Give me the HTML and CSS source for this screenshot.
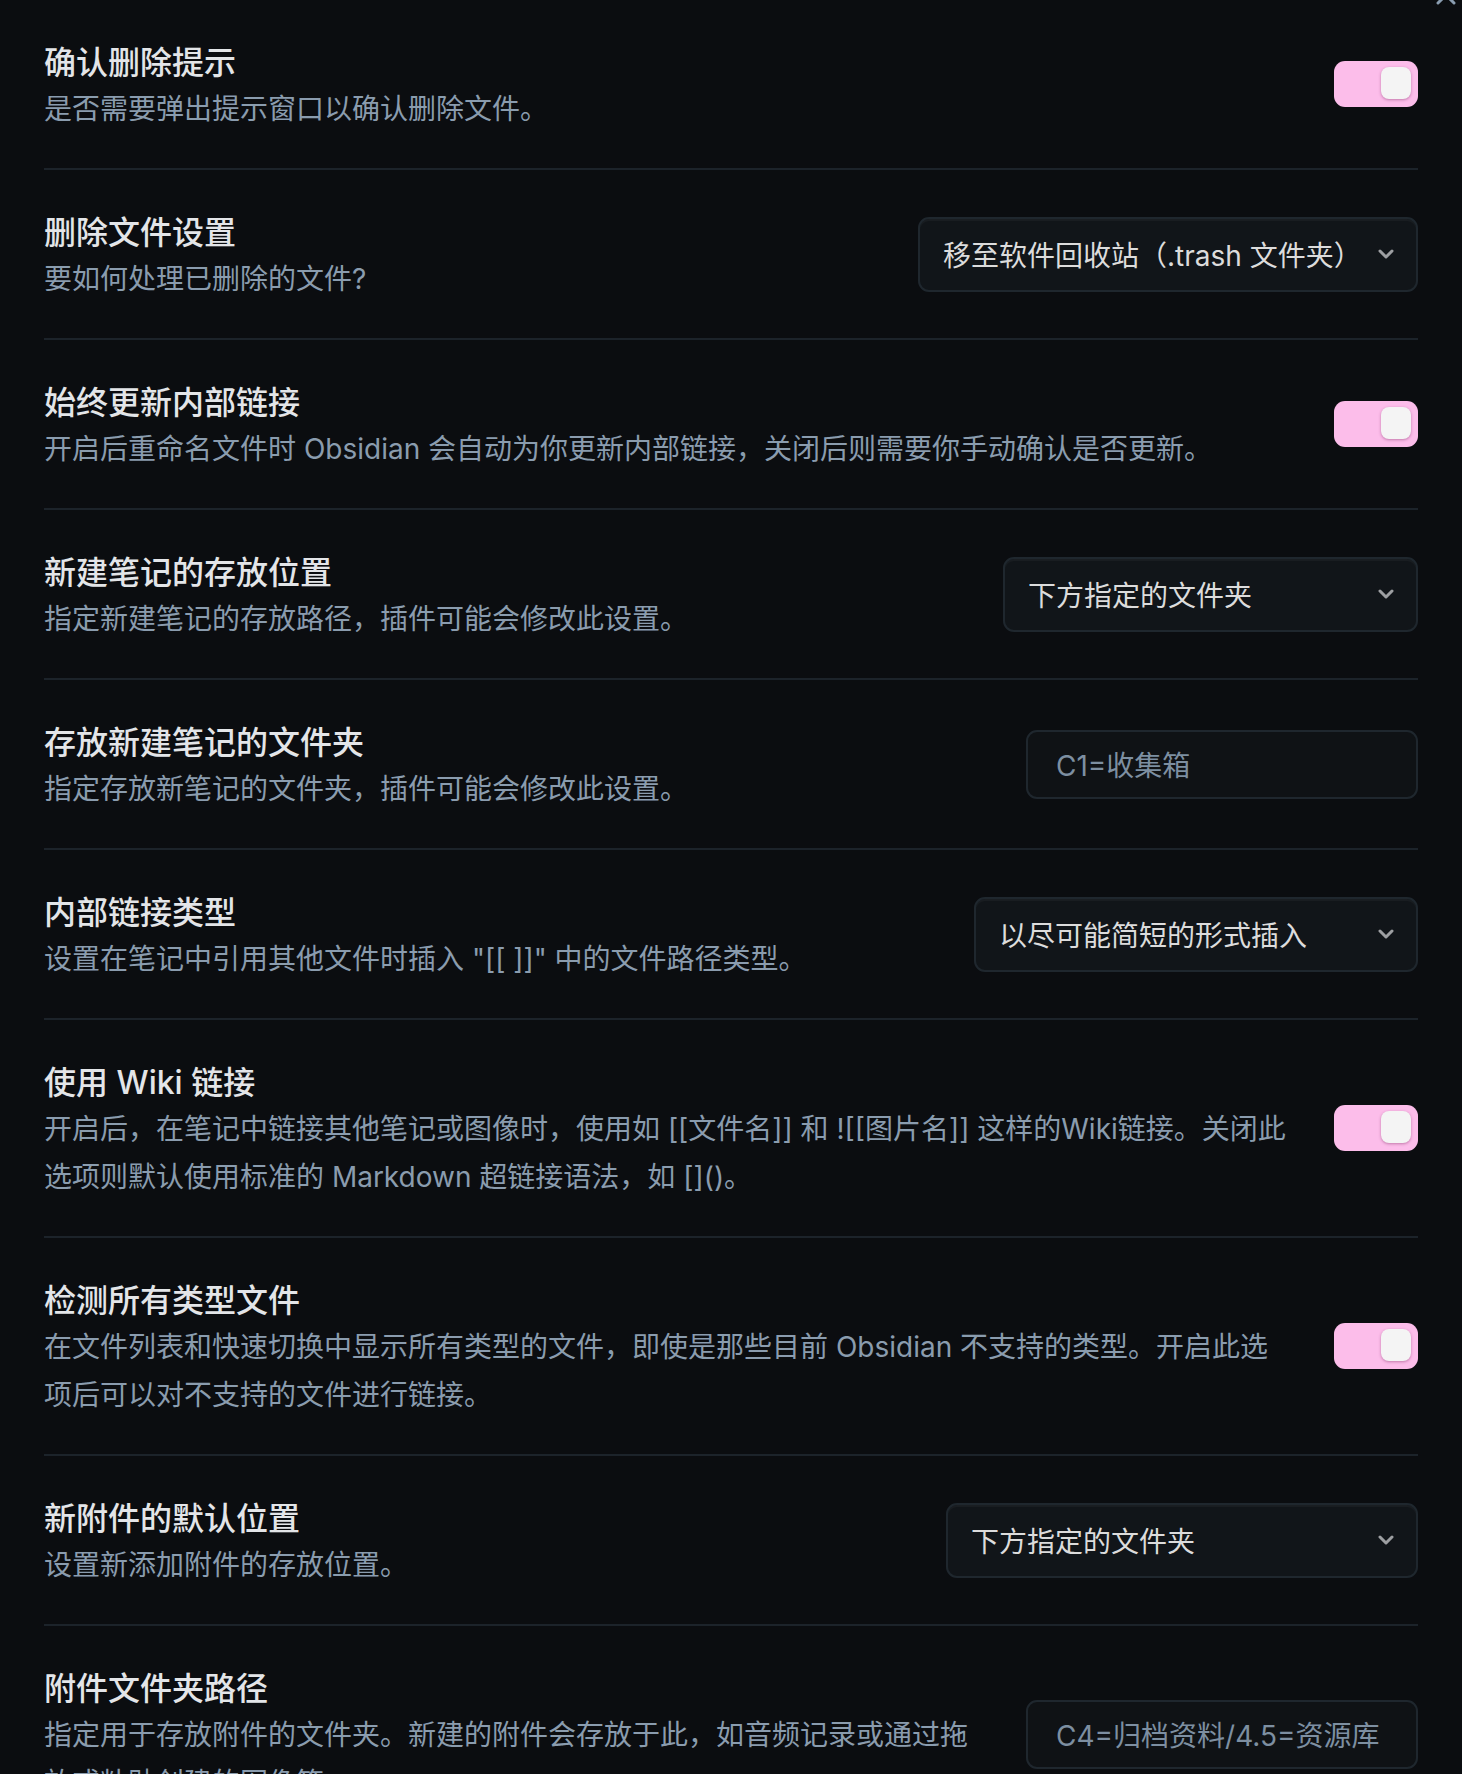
FILE: index.html
```html
<!DOCTYPE html>
<html lang="zh-CN">
<head>
<meta charset="utf-8">
<title>文件与链接</title>
<link rel="stylesheet" href="styles.css">
</head>
<body>
<div class="modal">
  <div class="close">
    <svg width="20" height="20" viewBox="0 0 20 20"><path d="M2 2 L18 18 M18 2 L2 18" stroke="#8a9db0" stroke-width="3" stroke-linecap="round" fill="none"/></svg>
  </div>
  <div class="settings">
    <div class="item">
      <div class="info">
        <div class="name">确认删除提示</div>
        <div class="desc">是否需要弹出提示窗口以确认删除文件。</div>
      </div>
      <div class="control"><div class="toggle"><div class="knob"></div></div></div>
    </div>

    <div class="item">
      <div class="info">
        <div class="name">删除文件设置</div>
        <div class="desc">要如何处理已删除的文件?</div>
      </div>
      <div class="control">
        <div class="select select-trash"><span>移至软件回收站（.trash 文件夹）</span><svg class="chev" width="16" height="10" viewBox="0 0 16 10"><path d="M2 2 L8 8 L14 2" stroke="#9d9fa2" stroke-width="3" stroke-linecap="round" stroke-linejoin="round" fill="none"/></svg></div>
      </div>
    </div>

    <div class="item">
      <div class="info">
        <div class="name">始终更新内部链接</div>
        <div class="desc">开启后重命名文件时 Obsidian 会自动为你更新内部链接，关闭后则需要你手动确认是否更新。</div>
      </div>
      <div class="control"><div class="toggle"><div class="knob"></div></div></div>
    </div>

    <div class="item">
      <div class="info">
        <div class="name">新建笔记的存放位置</div>
        <div class="desc">指定新建笔记的存放路径，插件可能会修改此设置。</div>
      </div>
      <div class="control">
        <div class="select select-folder"><span>下方指定的文件夹</span><svg class="chev" width="16" height="10" viewBox="0 0 16 10"><path d="M2 2 L8 8 L14 2" stroke="#9d9fa2" stroke-width="3" stroke-linecap="round" stroke-linejoin="round" fill="none"/></svg></div>
      </div>
    </div>

    <div class="item">
      <div class="info">
        <div class="name">存放新建笔记的文件夹</div>
        <div class="desc">指定存放新笔记的文件夹，插件可能会修改此设置。</div>
      </div>
      <div class="control">
        <div class="input">C1=收集箱</div>
      </div>
    </div>

    <div class="item">
      <div class="info">
        <div class="name">内部链接类型</div>
        <div class="desc">设置在笔记中引用其他文件时插入 "[[ ]]" 中的文件路径类型。</div>
      </div>
      <div class="control">
        <div class="select select-link"><span>以尽可能简短的形式插入</span><svg class="chev" width="16" height="10" viewBox="0 0 16 10"><path d="M2 2 L8 8 L14 2" stroke="#9d9fa2" stroke-width="3" stroke-linecap="round" stroke-linejoin="round" fill="none"/></svg></div>
      </div>
    </div>

    <div class="item">
      <div class="info">
        <div class="name">使用 Wiki 链接</div>
        <div class="desc">开启后，在笔记中链接其他笔记或图像时，使用如 [[文件名]] 和 ![[图片名]] 这样的Wiki链接。关闭此选项则默认使用标准的 Markdown 超链接语法，如 []()。</div>
      </div>
      <div class="control"><div class="toggle"><div class="knob"></div></div></div>
    </div>

    <div class="item">
      <div class="info">
        <div class="name">检测所有类型文件</div>
        <div class="desc">在文件列表和快速切换中显示所有类型的文件，即使是那些目前 Obsidian 不支持的类型。开启此选项后可以对不支持的文件进行链接。</div>
      </div>
      <div class="control"><div class="toggle"><div class="knob"></div></div></div>
    </div>

    <div class="item">
      <div class="info">
        <div class="name">新附件的默认位置</div>
        <div class="desc">设置新添加附件的存放位置。</div>
      </div>
      <div class="control">
        <div class="select select-attach"><span>下方指定的文件夹</span><svg class="chev" width="16" height="10" viewBox="0 0 16 10"><path d="M2 2 L8 8 L14 2" stroke="#9d9fa2" stroke-width="3" stroke-linecap="round" stroke-linejoin="round" fill="none"/></svg></div>
      </div>
    </div>

    <div class="item">
      <div class="info">
        <div class="name">附件文件夹路径</div>
        <div class="desc">指定用于存放附件的文件夹。新建的附件会存放于此，如音频记录或通过拖放或粘贴创建的图像等。</div>
      </div>
      <div class="control">
        <div class="input">C4=归档资料/4.5=资源库</div>
      </div>
    </div>
  </div>
</div>
</body>
</html>
```

FILE: styles.css
```css
html, body {
  margin: 0;
  padding: 0;
  background: #0b0d10;
}

body {
  font-family: Inter, "Noto Sans CJK SC", sans-serif;
}

.modal {
  position: relative;
  padding: 0 44px;
}

.close {
  position: absolute;
  top: -15px;
  right: 6px;
  width: 20px;
  height: 20px;
}

.close svg {
  display: block;
}

.settings {
  display: flex;
  flex-direction: column;
}

.item {
  display: flex;
  align-items: center;
  padding: 38px 0;
  border-top: 2px solid #1c232a;
}

.item:first-child {
  border-top: none;
}

.info {
  flex: 1 1 auto;
  min-width: 0;
  margin-right: 42px;
  padding-top: 3px;
  margin-bottom: -3px;
}

.name {
  font-size: 32px;
  line-height: 44px;
  font-weight: 500;
  color: #e3e5e8;
}

.desc {
  font-size: 28px;
  line-height: 48px;
  color: #8a9cae;
}

.control {
  flex: 0 0 auto;
  display: flex;
  justify-content: flex-end;
}

.toggle {
  width: 84px;
  height: 46px;
  box-sizing: border-box;
  padding: 6px 7px;
  border-radius: 11px;
  background: #fcbdea;
  display: flex;
  justify-content: flex-end;
  align-items: flex-start;
}

.knob {
  width: 30px;
  height: 32px;
  border-radius: 8px;
  background: #f4f4f4;
  box-shadow: 0 1px 3px rgba(120, 40, 90, 0.45);
}

.select {
  height: 75px;
  box-sizing: border-box;
  display: flex;
  align-items: center;
  justify-content: space-between;
  padding: 0 22px 0 23px;
  background: #111519;
  border: 2px solid #1f272e;
  border-radius: 11px;
  box-shadow: inset 0 2px 1px rgba(255, 255, 255, 0.04);
  color: #dcdcdc;
  font-size: 28px;
  white-space: nowrap;
}

.chev {
  flex: 0 0 auto;
  display: block;
}

.select-trash {
  width: 500px;
}

.select-folder {
  width: 415px;
}

.select-link {
  width: 444px;
}

.select-attach {
  width: 472px;
}

.input {
  width: 392px;
  height: 69px;
  box-sizing: border-box;
  display: flex;
  align-items: center;
  padding: 0 28px;
  background: #0f1215;
  border: 2px solid #1f272e;
  border-radius: 11px;
  color: #7d8fa1;
  font-size: 28px;
  white-space: nowrap;
}
```
